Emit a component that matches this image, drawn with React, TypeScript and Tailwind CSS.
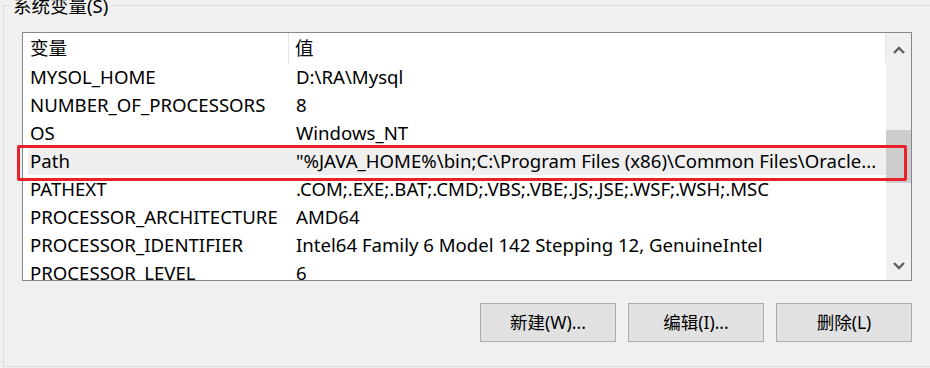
import React from "react";

const rows = [
  { name: "MYSOL_HOME", value: "D:\\RA\\Mysql" },
  { name: "NUMBER_OF_PROCESSORS", value: "8" },
  { name: "OS", value: "Windows_NT" },
  {
    name: "Path",
    value: '"%JAVA_HOME%\\bin;C:\\Program Files (x86)\\Common Files\\Oracle...',
    selected: true,
  },
  { name: "PATHEXT", value: ".COM;.EXE;.BAT;.CMD;.VBS;.VBE;.JS;.JSE;.WSF;.WSH;.MSC" },
  { name: "PROCESSOR_ARCHITECTURE", value: "AMD64" },
  { name: "PROCESSOR_IDENTIFIER", value: "Intel64 Family 6 Model 142 Stepping 12, GenuineIntel" },
  { name: "PROCESSOR_LEVEL", value: "6" },
];

const font = { fontFamily: '"Noto Sans", "Noto Sans CJK SC", sans-serif' };

const Chevron = ({ up }: { up?: boolean }) => (
  <svg width="12" height="8" viewBox="0 0 12 8">
    <polyline
      points={up ? "1,7 6,2 11,7" : "1,1 6,6 11,1"}
      fill="none"
      stroke="#606060"
      strokeWidth="2.4"
    />
  </svg>
);

const Button = ({ label }: { label: string }) => (
  <button className="w-[136px] h-[39px] bg-[#e1e1e1] border border-[#adadad] text-[17.5px] text-black leading-none">
    {label}
  </button>
);

export default function App() {
  return (
    <div
      className="relative w-[930px] h-[368px] overflow-hidden bg-[#f0f0f0] text-black"
      style={font}
    >
      {/* group box */}
      <div className="relative ml-[3px] mt-[5px] w-[950px] h-[362px] border border-[#dcdcdc] pl-[18px] pt-[26px]">
        <span className="absolute left-[6px] top-[-12px] bg-[#f0f0f0] px-[3px] text-[18.5px] leading-[24px]">
          系统变量(S)
        </span>

        {/* list view */}
        <div className="flex w-[890px] h-[249px] border border-[#828790] bg-white">
          <div className="flex-1 flex flex-col overflow-hidden text-[18.6px]">
            <div className="flex h-[30px] shrink-0 items-center">
              <div className="w-[266px] h-full flex items-center pl-[7px] border-r border-[#e5e5e5]">
                变量
              </div>
              <div className="flex-1 h-full flex items-center pl-[6px] border-r border-[#e5e5e5]">值</div>
            </div>
            {rows.map((r) => (
              <div
                key={r.name}
                className={`flex h-[28px] shrink-0 items-center ${r.selected ? "bg-[#efefef] ml-[5px]" : ""}`}
              >
                <div className={`${r.selected ? "w-[261px] pl-[2px]" : "w-[266px] pl-[7px]"} whitespace-nowrap`}>
                  {r.name}
                </div>
                <div className="flex-1 pl-[7px] whitespace-nowrap overflow-hidden">{r.value}</div>
              </div>
            ))}
          </div>

          {/* scrollbar */}
          <div className="w-[25px] flex flex-col bg-[#f0f0f0]">
            <div className="h-[33px] flex items-center justify-center">
              <Chevron up />
            </div>
            <div className="flex-1 flex flex-col">
              <div className="h-[64px]" />
              <div className="h-[53px] bg-[#cdcdcd]" />
            </div>
            <div className="h-[29px] flex items-center justify-center">
              <Chevron />
            </div>
          </div>
        </div>

        {/* buttons */}
        <div className="flex w-[890px] justify-end gap-[12px] mt-[22px]">
          <Button label="新建(W)..." />
          <Button label="编辑(I)..." />
          <Button label="删除(L)" />
        </div>

        {/* red annotation */}
        <div className="absolute left-[13px] top-[139px] w-[890px] h-[36px] border-[3px] border-[#e8212b] rounded-[2px] pointer-events-none" />
      </div>
    </div>
  );
}
